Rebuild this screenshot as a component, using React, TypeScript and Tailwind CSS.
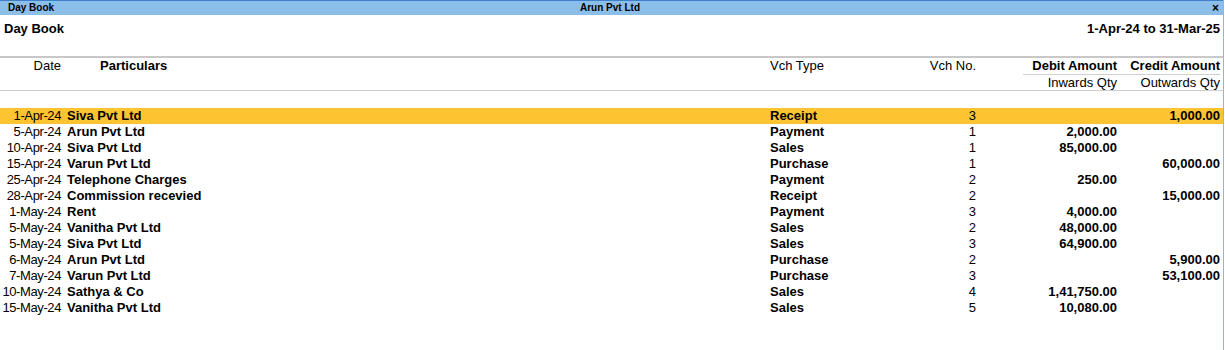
import React from "react";

type Row = { date: string; party: string; type: string; no: string; debit: string; credit: string };

const rows: Row[] = [
  { date: "1-Apr-24", party: "Siva Pvt Ltd", type: "Receipt", no: "3", debit: "", credit: "1,000.00" },
  { date: "5-Apr-24", party: "Arun Pvt Ltd", type: "Payment", no: "1", debit: "2,000.00", credit: "" },
  { date: "10-Apr-24", party: "Siva Pvt Ltd", type: "Sales", no: "1", debit: "85,000.00", credit: "" },
  { date: "15-Apr-24", party: "Varun Pvt Ltd", type: "Purchase", no: "1", debit: "", credit: "60,000.00" },
  { date: "25-Apr-24", party: "Telephone Charges", type: "Payment", no: "2", debit: "250.00", credit: "" },
  { date: "28-Apr-24", party: "Commission recevied", type: "Receipt", no: "2", debit: "", credit: "15,000.00" },
  { date: "1-May-24", party: "Rent", type: "Payment", no: "3", debit: "4,000.00", credit: "" },
  { date: "5-May-24", party: "Vanitha Pvt Ltd", type: "Sales", no: "2", debit: "48,000.00", credit: "" },
  { date: "5-May-24", party: "Siva Pvt Ltd", type: "Sales", no: "3", debit: "64,900.00", credit: "" },
  { date: "6-May-24", party: "Arun Pvt Ltd", type: "Purchase", no: "2", debit: "", credit: "5,900.00" },
  { date: "7-May-24", party: "Varun Pvt Ltd", type: "Purchase", no: "3", debit: "", credit: "53,100.00" },
  { date: "10-May-24", party: "Sathya & Co", type: "Sales", no: "4", debit: "1,41,750.00", credit: "" },
  { date: "15-May-24", party: "Vanitha Pvt Ltd", type: "Sales", no: "5", debit: "10,080.00", credit: "" },
];

const cols = "grid grid-cols-[61px_709px_160px_46px_141px_103px] whitespace-nowrap";

export default function App() {
  return (
    <div
      className="w-[1225px] h-[350px] bg-white text-black overflow-hidden"
      style={{ fontFamily: '"Liberation Sans", Arial, sans-serif' }}
    >
      <div className="w-[1224px] h-[350px] border-r border-[#8ab8e2] flex flex-col">
        {/* title bar */}
        <div className="h-[15px] border-t border-[#3f7fc8] bg-[#8bbee8] flex items-center text-[10px] font-bold leading-none relative whitespace-nowrap">
          <span className="pl-[8px]">Day Book</span>
          <span className="absolute left-[580px]">Arun Pvt Ltd</span>
          <span className="ml-auto pr-[4px] text-[12px] leading-none">×</span>
        </div>

        {/* heading */}
        <div className="flex justify-between items-start pl-[4px] pr-[3px] pt-[6px] h-[41px] text-[13px] font-bold leading-[16px] whitespace-nowrap">
          <span>Day Book</span>
          <span>1-Apr-24 to 31-Mar-25</span>
        </div>

        <div className="h-[2px] bg-[#c8c8c8]" />

        {/* column headers */}
        <div className={`${cols} text-[13px] leading-[15px]`}>
          <div className="flex justify-end">Date</div>
          <div className="pl-[39px] font-bold">Particulars</div>
          <div>Vch Type</div>
          <div className="flex justify-end">Vch No.</div>
          <div className="col-span-2 flex flex-col ml-[47px]">
            <div className="flex">
              <span className="w-[94px] text-right font-bold">Debit Amount</span>
              <span className="w-[103px] text-right font-bold">Credit Amount</span>
            </div>
            <div className="h-px bg-[#d0d0d0] mt-[1px]" />
            <div className="flex">
              <span className="w-[94px] text-right">Inwards Qty</span>
              <span className="w-[103px] text-right">Outwards Qty</span>
            </div>
          </div>
        </div>

        <div className="h-px bg-[#cfcfcf]" />

        {/* rows */}
        <div className="pt-[17px] text-[13px] leading-[16px]">
          {rows.map((r, i) => (
            <div key={i} className={`${cols} h-[16px] ${i === 0 ? "bg-[#fdc431]" : ""}`}>
              <div className="flex justify-end tracking-[-0.4px]">{r.date}</div>
              <div className="pl-[6px] font-bold">{r.party}</div>
              <div className="font-bold">{r.type}</div>
              <div className="flex justify-end">{r.no}</div>
              <div className="text-right font-bold">{r.debit}</div>
              <div className="text-right font-bold">{r.credit}</div>
            </div>
          ))}
        </div>
      </div>
    </div>
  );
}
